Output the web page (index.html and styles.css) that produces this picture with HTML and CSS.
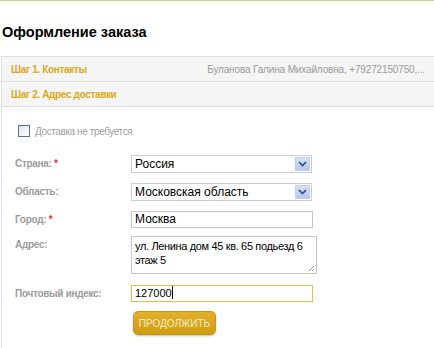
FILE: index.html
```html
<!DOCTYPE html>
<html>
<head>
    <title>Оформление заказа</title>
    <link rel="stylesheet" href="styles.css">
</head>
<body>
    <div class="topline"></div>
    <h1>Оформление заказа</h1>
    <div class="checkout">
        <div class="step">
            <span class="step-title">Шаг 1. Контакты</span>
            <span class="step-info">Буланова Галина Михайловна, +79272150750,...</span>
        </div>
        <div class="step">
            <span class="step-title">Шаг 2. Адрес доставки</span>
        </div>
        <div class="step-body">
            <label class="nodelivery"><span class="checkbox"></span>Доставка не требуется</label>
            <div class="row">
                <div class="label">Страна: <span class="req">*</span></div>
                <div class="select"><span>Россия</span><span class="arrow"><svg width="9" height="6" viewBox="0 0 9 6"><path d="M1 1l3.5 3.5L8 1" fill="none" stroke="#2b4a8a" stroke-width="1.6"/></svg></span></div>
            </div>
            <div class="row">
                <div class="label">Область:</div>
                <div class="select"><span>Московская область</span><span class="arrow"><svg width="9" height="6" viewBox="0 0 9 6"><path d="M1 1l3.5 3.5L8 1" fill="none" stroke="#2b4a8a" stroke-width="1.6"/></svg></span></div>
            </div>
            <div class="row">
                <div class="label">Город: <span class="req">*</span></div>
                <div class="input">Москва</div>
            </div>
            <div class="row row-address">
                <div class="label">Адрес:</div>
                <div class="textarea">ул. Ленина дом 45 кв. 65 подьезд 6<br>этаж 5<svg class="grip" width="7" height="7" viewBox="0 0 7 7"><path d="M6 1L1 6M6 4L4 6" stroke="#999" stroke-width="1"/></svg></div>
            </div>
            <div class="row row-zip">
                <div class="label">Почтовый индекс:</div>
                <div class="input focused">127000<span class="caret"></span></div>
            </div>
            <button class="submit" type="button">ПРОДОЛЖИТЬ</button>
        </div>
    </div>
</body>
</html>
```

FILE: styles.css
```css
body {
    font-family: "Liberation Sans", Arial, sans-serif;
    margin: 0;
    background-color: #ffffff;
    color: #000000;
    height: 348px;
    overflow: hidden;
}

.topline {
    height: 1px;
    background-color: #c4d68c;
}

h1 {
    font-size: 14.5px;
    font-weight: bold;
    margin: 22px 0 0 2px;
    height: 33px;
    line-height: 18px;
}

.checkout {
    margin-left: 1px;
    border-left: 1px solid #e0e0e0;
}

.step {
    display: flex;
    justify-content: space-between;
    align-items: center;
    height: 24px;
    padding: 0 9px 0 9px;
    background-color: #f5f5f5;
    border-top: 1px solid #dedede;
}

.step + .step {
    border-bottom: 1px solid #dedede;
}

.step-title {
    color: #dca817;
    font-weight: bold;
    font-size: 10px;
    letter-spacing: -0.35px;
}

.step-info {
    color: #9a9a9a;
    font-size: 10px;
    letter-spacing: -0.15px;
}

.step-body {
    padding: 18px 0 0 13px;
    height: 242px;
    box-sizing: border-box;
}

.nodelivery {
    display: flex;
    align-items: center;
    font-size: 10px;
    letter-spacing: -0.4px;
    color: #a0a0a0;
    margin-left: 3px;
    height: 12px;
}

.checkbox {
    width: 10px;
    height: 10px;
    border: 1px solid #5a6f94;
    background: linear-gradient(135deg, #dfe3ea, #ffffff);
    margin-right: 5px;
}

.row {
    display: flex;
    align-items: flex-start;
    margin-top: 10px;
}

.nodelivery + .row {
    margin-top: 18px;
}

.label {
    width: 116px;
    font-size: 10px;
    letter-spacing: -0.3px;
    font-weight: bold;
    color: #9c9c9c;
    padding-top: 3px;
}

.req {
    color: #e03030;
}

.select {
    display: flex;
    justify-content: space-between;
    align-items: center;
    width: 175px;
    height: 16px;
    padding: 0 1px 0 3px;
    border: 1px solid #c9cdd4;
    font-size: 12px;
}

.arrow {
    display: flex;
    align-items: center;
    justify-content: center;
    width: 15px;
    height: 14px;
    background: linear-gradient(#d6e1f6, #b7c8ea);
    border: 1px solid #c4d0ea;
    box-sizing: border-box;
}

.input {
    width: 174px;
    height: 15px;
    padding: 0 3px;
    border: 1px solid #c6c6c6;
    font-size: 12px;
    line-height: 15px;
}

.textarea {
    position: relative;
    width: 178px;
    height: 34px;
    padding: 2px 3px 0;
    border: 1px solid #c6c6c6;
    font-size: 11px;
    letter-spacing: -0.35px;
    line-height: 14px;
    white-space: nowrap;
}

.grip {
    position: absolute;
    right: 1px;
    bottom: 1px;
}

.row-address {
    margin-top: 8px;
}

.row-zip {
    margin-top: 11px;
}

.input.focused {
    border-color: #e3bb5a;
    box-shadow: 0 0 1px #f0d38a;
    font-size: 11px;
}

.caret {
    display: inline-block;
    width: 1px;
    height: 13px;
    background-color: #000000;
    vertical-align: -2px;
}

.submit {
    margin: 9px 0 0 118px;
    width: 83px;
    height: 24px;
    border: 1px solid #c8960c;
    border-radius: 5px;
    background: linear-gradient(#e2b02a, #d09c10);
    box-shadow: 0 1px 2px rgba(0, 0, 0, 0.25);
    color: #f6ecc8;
    font-family: "Liberation Sans", Arial, sans-serif;
    font-size: 10px;
    padding: 0;
}
```
